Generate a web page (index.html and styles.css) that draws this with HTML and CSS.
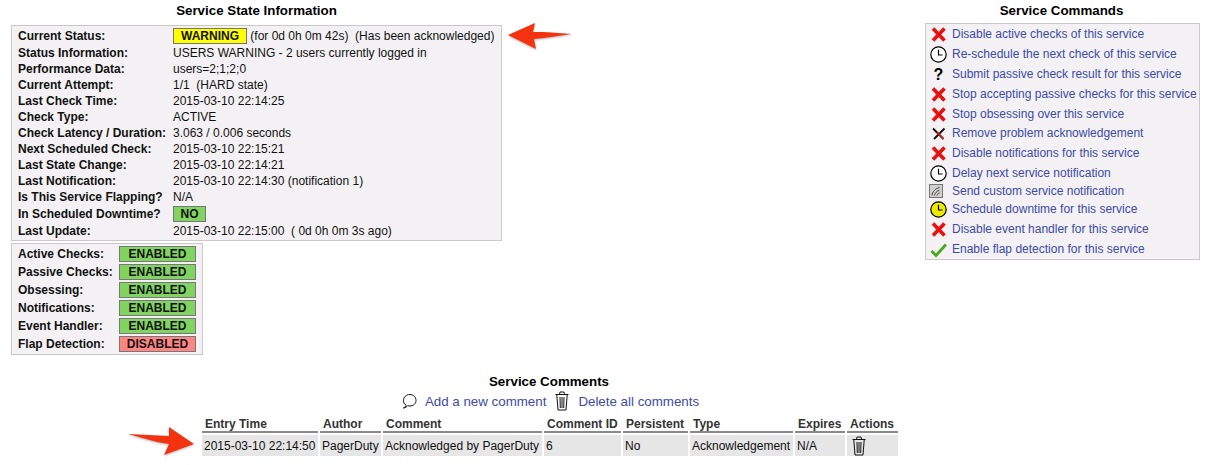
FILE: index.html
```html
<!DOCTYPE html>
<html lang="en">
<head>
<meta charset="utf-8">
<title>Service Information</title>
<link rel="stylesheet" href="styles.css">
</head>
<body>
<svg class="defs" width="0" height="0" aria-hidden="true">
  <defs>
    <symbol id="i-x" viewBox="0 0 17 17"><path d="M3 2.500 14.500 14.500M14.500 2.500 3 14.500" stroke="#e8110f" stroke-width="3.600" fill="none"/></symbol>
    <symbol id="i-clock" viewBox="0 0 17 17"><circle cx="8.500" cy="8.500" r="7.700" fill="#fff" stroke="#000" stroke-width="1.200"/><path d="M8.500 3.800V9H12.500" fill="none" stroke="#000" stroke-width="1.200"/></symbol>
    <symbol id="i-yclock" viewBox="0 0 17 17"><circle cx="8.500" cy="8.500" r="7.700" fill="#ecec00" stroke="#000" stroke-width="1.200"/><path d="M8.500 3.800V9H12.500" fill="none" stroke="#000" stroke-width="1.200"/></symbol>
    <symbol id="i-ack" viewBox="0 0 17 17"><path d="M3 3.500 13.500 14M14.500 3.500 4 14" stroke="#111" stroke-width="1.900" fill="none"/><path d="M7 7 13.500 14" stroke="#d8201c" stroke-width="1.700" fill="none"/></symbol>
    <symbol id="i-notify" viewBox="0 0 14 14"><rect x=".5" y=".5" width="13" height="13" fill="#cfcfcf" stroke="#777"/><path d="M3 11.500C3.500 7.500 6.500 4.500 10.500 3.500M5.500 11.500C6 9 7.500 7.200 10.500 6.300M8 11.500C8.300 10 9.200 9.200 10.500 9" fill="none" stroke="#444" stroke-width="1"/></symbol>
    <symbol id="i-check" viewBox="0 0 17 17"><path d="M1.500 10 6 14.500 16 3.500" fill="none" stroke="#4aa81c" stroke-width="2.800"/></symbol>
    <symbol id="i-trash" viewBox="0 0 16 20"><path d="M1.500 3.500H14.500M5.500 3.500 6 1H10L10.500 3.500M2.800 4 4 19H12L13.200 4M6 6 6.300 17M8 6V17M10 6 9.700 17" fill="none" stroke="#111" stroke-width="1"/></symbol>
    <symbol id="i-bubble" viewBox="0 0 16 16"><path d="M5.200 12.300C3.200 11.200 2.500 9.500 2.500 7.500 2.500 4.200 5.200 1.500 8.800 1.500S15 4.200 15 7.500 12.300 13 8.800 13C8 13 7.300 12.900 6.700 12.700 5.800 13.900 4.300 14.800 2.300 15 3.800 14.300 4.800 13.400 5.200 12.300Z" fill="#fff" stroke="#111" stroke-width="1"/></symbol>
  </defs>
</svg>

<div class="top">
  <section class="state-col">
    <h2 class="title">Service State Information</h2>
    <div class="panel state">
      <div class="lbl">Current Status:</div><div class="val"><span class="badge warn">WARNING</span> (for 0d 0h 0m 42s)&nbsp; (Has been acknowledged)</div>
      <div class="lbl">Status Information:</div><div class="val">USERS WARNING - 2 users currently logged in</div>
      <div class="lbl">Performance Data:</div><div class="val">users=2;1;2;0</div>
      <div class="lbl">Current Attempt:</div><div class="val">1/1&nbsp; (HARD state)</div>
      <div class="lbl">Last Check Time:</div><div class="val">2015-03-10 22:14:25</div>
      <div class="lbl">Check Type:</div><div class="val">ACTIVE</div>
      <div class="lbl">Check Latency / Duration:</div><div class="val">3.063&nbsp;/&nbsp;0.006 seconds</div>
      <div class="lbl">Next Scheduled Check:</div><div class="val">2015-03-10 22:15:21</div>
      <div class="lbl">Last State Change:</div><div class="val">2015-03-10 22:14:21</div>
      <div class="lbl">Last Notification:</div><div class="val">2015-03-10 22:14:30 (notification 1)</div>
      <div class="lbl">Is This Service Flapping?</div><div class="val">N/A</div>
      <div class="lbl">In Scheduled Downtime?</div><div class="val"><span class="badge ok no">NO</span></div>
      <div class="lbl">Last Update:</div><div class="val">2015-03-10 22:15:00&nbsp; ( 0d 0h 0m 3s ago)</div>
    </div>
    <div class="panel flags">
      <div class="lbl">Active Checks:</div><div class="badge ok flag">ENABLED</div>
      <div class="lbl">Passive Checks:</div><div class="badge ok flag">ENABLED</div>
      <div class="lbl">Obsessing:</div><div class="badge ok flag">ENABLED</div>
      <div class="lbl">Notifications:</div><div class="badge ok flag">ENABLED</div>
      <div class="lbl">Event Handler:</div><div class="badge ok flag">ENABLED</div>
      <div class="lbl">Flap Detection:</div><div class="badge bad flag">DISABLED</div>
    </div>
  </section>

  <section class="cmd-col">
    <h2 class="title cmd-title">Service Commands</h2>
    <ul class="panel cmds">
      <li class="cmd"><svg class="ico"><use href="#i-x"/></svg><a href="#">Disable active checks of this service</a></li>
      <li class="cmd"><svg class="ico"><use href="#i-clock"/></svg><a href="#">Re-schedule the next check of this service</a></li>
      <li class="cmd"><span class="ico q">?</span><a href="#">Submit passive check result for this service</a></li>
      <li class="cmd"><svg class="ico"><use href="#i-x"/></svg><a href="#">Stop accepting passive checks for this service</a></li>
      <li class="cmd"><svg class="ico"><use href="#i-x"/></svg><a href="#">Stop obsessing over this service</a></li>
      <li class="cmd"><svg class="ico"><use href="#i-ack"/></svg><a href="#">Remove problem acknowledgement</a></li>
      <li class="cmd"><svg class="ico"><use href="#i-x"/></svg><a href="#">Disable notifications for this service</a></li>
      <li class="cmd"><svg class="ico"><use href="#i-clock"/></svg><a href="#">Delay next service notification</a></li>
      <li class="cmd"><svg class="ico ico-n"><use href="#i-notify"/></svg><a href="#">Send custom service notification</a></li>
      <li class="cmd"><svg class="ico"><use href="#i-yclock"/></svg><a href="#">Schedule downtime for this service</a></li>
      <li class="cmd"><svg class="ico"><use href="#i-x"/></svg><a href="#">Disable event handler for this service</a></li>
      <li class="cmd"><svg class="ico"><use href="#i-check"/></svg><a href="#">Enable flap detection for this service</a></li>
    </ul>
  </section>
</div>

<section class="comments">
  <h2 class="title">Service Comments</h2>
  <div class="links">
    <svg class="link-ico"><use href="#i-bubble"/></svg><a href="#">Add a new comment</a>
    <svg class="link-ico trash"><use href="#i-trash"/></svg><a href="#">Delete all comments</a>
  </div>
  <table class="ctable">
    <thead>
      <tr>
        <th class="c1">Entry Time</th><th class="c2">Author</th><th class="c3">Comment</th><th class="c4">Comment ID</th><th class="c5">Persistent</th><th class="c6">Type</th><th class="c7">Expires</th><th class="c8">Actions</th>
      </tr>
    </thead>
    <tbody>
      <tr>
        <td>2015-03-10 22:14:50</td><td>PagerDuty</td><td>Acknowledged by PagerDuty</td><td>6</td><td>No</td><td>Acknowledgement</td><td>N/A</td><td><svg class="link-ico act"><use href="#i-trash"/></svg></td>
      </tr>
    </tbody>
  </table>
</section>

<svg class="arrow arrow-top" viewBox="0 0 70 30" aria-hidden="true"><path d="M2 12 29 0 27 9 38 9 66 11 38 15 28 16 30 26Z" fill="#f5320f"/></svg>
<svg class="arrow arrow-bottom" viewBox="0 0 70 30" aria-hidden="true"><path d="M1 8 42 10 42 1 67 18 37 29 42 18 30 16Z" fill="#f5320f"/></svg>
</body>
</html>
```
FILE: styles.css
```css
html, body { margin: 0; padding: 0; background: #fff; }
body {
  position: relative;
  width: 1209px;
  height: 465px;
  overflow: hidden;
  font-family: "Liberation Sans", Arial, sans-serif;
  font-size: 12px;
  color: #111;
}
.defs { position: absolute; }
.top {
  display: flex;
  justify-content: space-between;
  align-items: flex-start;
  padding: 3px 9px 0 11px;
}
.title {
  margin: 0;
  font-size: 13.33px;
  line-height: 15px;
  font-weight: bold;
  text-align: center;
  color: #000;
}
.cmd-title { padding-right: 2px; }
.state-col { width: 491px; }
.panel {
  box-sizing: border-box;
  background: #f3f1f3;
  border: 1px solid #c9c9c9;
}
.state {
  margin-top: 7px;
  display: grid;
  grid-template-columns: 155px 1fr;
  grid-template-rows: 19px repeat(10, 16px) 18px 16px;
  padding: 0 6px 3px;
  height: 216px;
  align-items: center;
}
.lbl { font-weight: bold; white-space: nowrap; }
.val { white-space: nowrap; }
.badge {
  display: inline-block;
  box-sizing: border-box;
  border: 1px solid #777;
  font-weight: bold;
  text-align: center;
}
.warn { background: #ffff00; width: 74px; height: 16px; line-height: 14px; }
.ok { background: #81d45f; }
.bad { background: #ff8585; }
.no { width: 33px; height: 16px; line-height: 14px; }
.flags {
  margin-top: 2px;
  width: 192px;
  height: 112px;
  display: grid;
  grid-template-columns: 101px 77px;
  grid-auto-rows: 18px;
  padding: 1px 6px;
  align-items: center;
}
.flag { height: 16px; line-height: 14px; }
.cmd-col { width: 275px; }
.cmds {
  margin: 5px 0 0;
  padding: 0;
  list-style: none;
  height: 237px;
  display: grid;
  grid-template-rows: repeat(5, 20px) 18px 22px 18px 18px 18px 22px 18px;
}
.cmd {
  display: flex;
  align-items: center;
  padding-left: 4px;
  white-space: nowrap;
}
.ico { width: 17px; height: 17px; flex: none; margin-right: 5px; }
.ico-n { width: 14px; height: 14px; margin: 0 9px 0 -1px; }
.q {
  font-size: 16px;
  font-weight: bold;
  text-align: center;
  line-height: 17px;
  color: #000;
}
a { color: #3c4ba6; text-decoration: none; }
.comments {
  margin-top: 19px;
  width: 1098px;
  display: flex;
  flex-direction: column;
  align-items: center;
}
.links {
  display: flex;
  align-items: center;
  font-size: 13.33px;
  height: 20px;
  margin: 2px 0 0 2px;
}
.link-ico { width: 16px; height: 16px; margin: 0 8px 0 0; }
.link-ico.trash { height: 20px; margin-left: 8px; margin-right: 8px; }
.link-ico.act { display: block; height: 20px; margin: 0 0 0 2px; }
.ctable {
  border-collapse: separate;
  border-spacing: 2px;
  margin: 3px 0 0 2px;
  table-layout: fixed;
  width: 700px;
}
.ctable th {
  text-align: left;
  font-weight: bold;
  color: #333;
  border-bottom: 2px solid #8a8a8a;
  height: 15px;
  padding: 0 1px 0 3px;
  line-height: 14px;
}
.ctable td {
  background: #e6e6e6;
  height: 21px;
  padding: 0 1px 0 2px;
  white-space: nowrap;
  color: #111;
}
.c1 { width: 112px; }
.c2 { width: 57px; }
.c3 { width: 155px; }
.c4 { width: 73px; }
.c5 { width: 61px; }
.c6 { width: 99px; }
.c7 { width: 46px; }
.c8 { width: 47px; }
.arrow { position: absolute; filter: drop-shadow(0 1px 1px rgba(0, 0, 0, .3)); }
.arrow-top { left: 506px; top: 23px; width: 70px; height: 30px; }
.arrow-bottom { left: 127px; top: 426px; width: 70px; height: 30px; }
```
